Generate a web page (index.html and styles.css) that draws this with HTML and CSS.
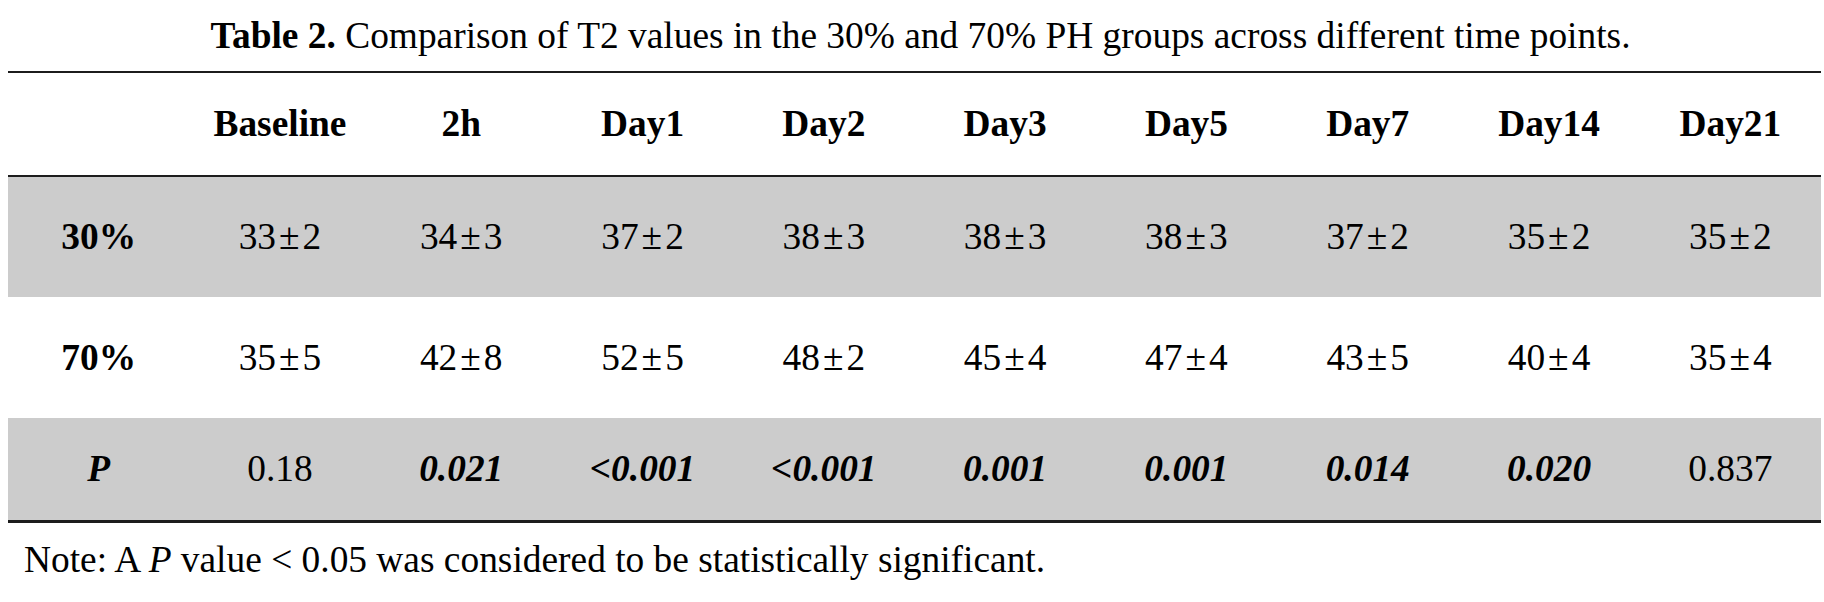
FILE: index.html
```html
<!DOCTYPE html>
<html lang="en">
<head>
<meta charset="utf-8">
<title>Table 2</title>
<link rel="stylesheet" href="styles.css">
</head>
<body>
<div class="page">
  <div class="caption"><b>Table 2.</b> Comparison of T2 values in the 30% and 70% PH groups across different time points.</div>
  <table class="data">
    <thead>
      <tr class="head">
        <th></th><th>Baseline</th><th>2h</th><th>Day1</th><th>Day2</th><th>Day3</th><th>Day5</th><th>Day7</th><th>Day14</th><th>Day21</th>
      </tr>
    </thead>
    <tbody>
      <tr class="row-a shade">
        <th>30%</th><td>33<span class="pm">±</span>2</td><td>34<span class="pm">±</span>3</td><td>37<span class="pm">±</span>2</td><td>38<span class="pm">±</span>3</td><td>38<span class="pm">±</span>3</td><td>38<span class="pm">±</span>3</td><td>37<span class="pm">±</span>2</td><td>35<span class="pm">±</span>2</td><td>35<span class="pm">±</span>2</td>
      </tr>
      <tr class="row-b">
        <th>70%</th><td>35<span class="pm">±</span>5</td><td>42<span class="pm">±</span>8</td><td>52<span class="pm">±</span>5</td><td>48<span class="pm">±</span>2</td><td>45<span class="pm">±</span>4</td><td>47<span class="pm">±</span>4</td><td>43<span class="pm">±</span>5</td><td>40<span class="pm">±</span>4</td><td>35<span class="pm">±</span>4</td>
      </tr>
      <tr class="row-p shade">
        <th><i>P</i></th><td>0.18</td><td class="sig">0.021</td><td class="sig">&lt;0.001</td><td class="sig">&lt;0.001</td><td class="sig">0.001</td><td class="sig">0.001</td><td class="sig">0.014</td><td class="sig">0.020</td><td>0.837</td>
      </tr>
    </tbody>
  </table>
  <p class="note">Note: A <i>P</i> value &lt; 0.05 was considered to be statistically significant.</p>
</div>
</body>
</html>
```
FILE: styles.css
```css
html, body {
  margin: 0;
  padding: 0;
  background: #ffffff;
}

body {
  font-family: "Liberation Serif", "Times New Roman", serif;
  font-size: 37.4px;
  color: #000000;
}

.page {
  padding-left: 8px;
  width: 1813px;
}

.caption {
  box-sizing: border-box;
  height: 71px;
  padding-top: 15px;
  padding-left: 12px;
  line-height: 42px;
  text-align: center;
  white-space: nowrap;
}

.data {
  width: 1813px;
  table-layout: fixed;
  border-collapse: separate;
  border-spacing: 0;
  border-top: 2px solid #1c1c1c;
  border-bottom: 3px solid #1c1c1c;
}

.data th,
.data td {
  padding: 0;
  text-align: center;
  vertical-align: middle;
  line-height: 42px;
  font-weight: normal;
  white-space: nowrap;
}

.data th {
  font-weight: bold;
}

.head {
  height: 104px;
}

.head th {
  border-bottom: 2px solid #1c1c1c;
}

.row-a {
  height: 120px;
}

.row-b {
  height: 121px;
}

.row-p {
  height: 102px;
}

.shade {
  background: #cccccc;
}

.data .sig {
  font-weight: bold;
  font-style: italic;
}

.pm {
  padding: 0 3px;
}

.note {
  margin: 16px 0 0 16px;
  line-height: 42px;
  white-space: nowrap;
}
```
